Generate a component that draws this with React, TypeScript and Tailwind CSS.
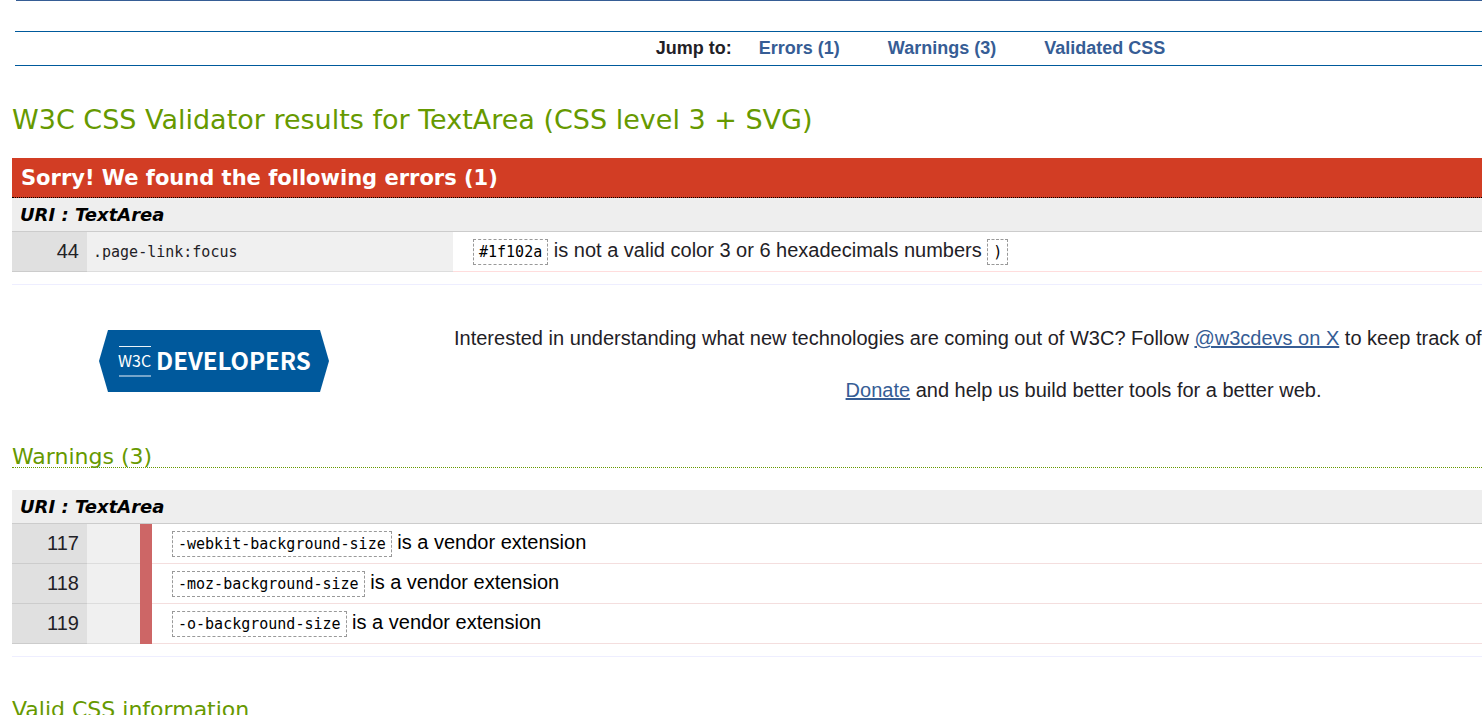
import type { ReactNode } from "react";

const Code = ({ children }: { children: ReactNode }) => (
  <code className="inline-block border border-dashed border-[#999] px-[5px] font-['DejaVu_Sans_Mono',monospace] text-[15px] leading-6 text-black">
    {children}
  </code>
);

const UriHeading = () => (
  <h4 className="h-[34px] border-b border-[#ccc] bg-[#eee] pl-2 font-['DejaVu_Sans',sans-serif] text-[18px] leading-[33px] font-bold text-black italic">
    URI : TextArea
  </h4>
);

const Developers = () => (
  <svg viewBox="0 0 230 62" className="h-[62px] w-[230px]" role="img" aria-label="W3C Developers">
    <path d="M9 0H221L230 31L221 62H9L0 31Z" fill="#00599c" />
    <path d="M20 16.5H52M20 46H52" stroke="#e9f2f8" strokeWidth="1.2" />
    <text x="19" y="37" fill="#fff" fontSize="16" fontFamily="'Noto Sans CJK SC', sans-serif">W3C</text>
    <text x="57" y="40" fill="#fff" fontSize="24" fontWeight="700" fontFamily="'Noto Sans CJK SC', sans-serif">DEVELOPERS</text>
  </svg>
);

const warnings = [
  { line: 117, property: "-webkit-background-size" },
  { line: 118, property: "-moz-background-size" },
  { line: 119, property: "-o-background-size" },
];

export default function App() {
  return (
    <div className="overflow-hidden bg-white font-['Liberation_Sans',Arial,sans-serif] text-[20px] text-[#1f2126]">
      <div className="w-[122%] pl-3">
        <div className="ml-1 h-px bg-[#365d95]" />
        <nav className="mt-[30px] ml-[3px] flex h-[35px] items-center justify-center border-y border-[#005a9c] pr-0.5 pb-0.5 text-[18px] leading-6 font-bold">
          <span className="mr-[27px]">Jump to:</span>
          <ul className="flex gap-12 text-[#365d95]">
            <li><a href="#errors">Errors (1)</a></li>
            <li><a href="#warnings">Warnings (3)</a></li>
            <li><a href="#css">Validated CSS</a></li>
          </ul>
        </nav>

        <h2 className="mt-9 font-['DejaVu_Sans',sans-serif] text-[27px] leading-9 text-[#690]">
          W3C CSS Validator results for TextArea (CSS level 3 + SVG)
        </h2>

        <section id="errors" className="mt-5 border-b border-[#eef]">
          <h3 className="h-10 border-b border-dotted border-black bg-[#d23d24] pl-[9px] font-['DejaVu_Sans',sans-serif] text-[21px] leading-10 font-bold text-white">
            Sorry! We found the following errors (1)
          </h3>
          <UriHeading />
          <table className="mb-3 w-full table-fixed border-separate border-spacing-0">
            <colgroup>
              <col className="w-[75px]" />
              <col className="w-[366px]" />
              <col />
            </colgroup>
            <tbody>
              <tr className="h-10">
                <td className="border-b border-[#ccc] bg-[#e0e0e0] pr-2 pb-0.5 text-right leading-6">44</td>
                <td className="border-b border-[#ddd] bg-[#f0f0f0] pl-[6px] font-['DejaVu_Sans_Mono',monospace] text-[15px] leading-6">.page-link:focus</td>
                <td className="border-b border-[#fdd] pl-5 leading-6 whitespace-nowrap">
                  <Code>#1f102a</Code> is not a valid color 3 or 6 hexadecimals numbers <Code>)</Code>
                </td>
              </tr>
            </tbody>
          </table>
        </section>

        <section className="mt-10 flex">
          <div className="w-[442px] shrink-0 pt-[5px] pl-[87px]">
            <Developers />
          </div>
          <div className="min-w-0 flex-1 whitespace-nowrap">
            <p className="leading-[26px]">
              Interested in understanding what new technologies are coming out of W3C? Follow{" "}
              <a href="#x" className="text-[#365d95] underline">@w3cdevs on X</a> to keep track of the future!
            </p>
            <p className="mt-[26px] pr-[95px] text-center leading-[26px]">
              <a href="#donate" className="text-[#365d95] underline">Donate</a> and help us build better tools for a better web.
            </p>
          </div>
        </section>

        <section id="warnings" className="mt-11 border-b border-[#eef]">
          <h3 className="mb-[22px] border-b border-dotted border-[#690] font-['DejaVu_Sans',sans-serif] text-[22px] leading-5 text-[#690]">
            Warnings (3)
          </h3>
          <UriHeading />
          <table className="mb-3 w-full table-fixed border-separate border-spacing-0">
            <colgroup>
              <col className="w-[75px]" />
              <col className="w-[53px]" />
              <col />
            </colgroup>
            <tbody>
              {warnings.map((w) => (
                <tr key={w.line} className="h-10">
                  <td className="border-b border-[#ccc] bg-[#e0e0e0] pr-2 pb-0.5 text-right leading-6">{w.line}</td>
                  <td className="border-b border-[#ddd] bg-[#f0f0f0]" />
                  <td className="p-0 leading-6 text-black">
                    <div className="h-10 border-l-12 border-[#cd6666]">
                      <div className="h-10 border-b border-[#f4dede] pt-1.5 pl-5">
                        <Code>{w.property}</Code> is a vendor extension
                      </div>
                    </div>
                  </td>
                </tr>
              ))}
            </tbody>
          </table>
        </section>

        <h3 id="css" className="mt-[41px] font-['DejaVu_Sans',sans-serif] text-[22px] leading-6 text-[#690]">
          Valid CSS information
        </h3>
      </div>
    </div>
  );
}
